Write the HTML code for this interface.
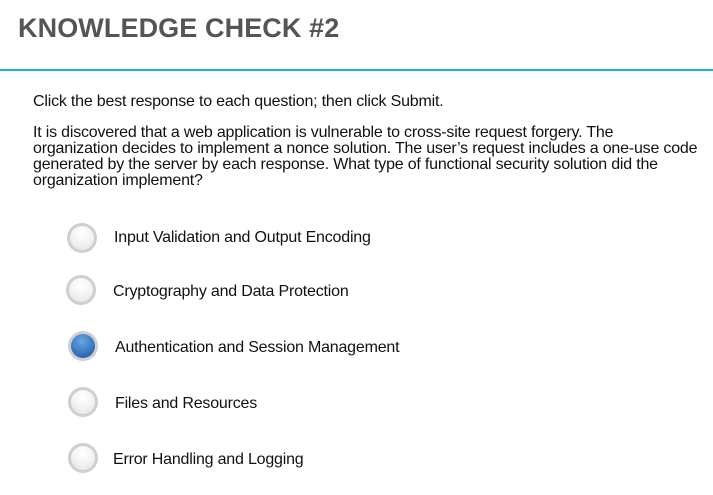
<!DOCTYPE html>
<html><head><style>
html,body{margin:0;padding:0;background:#fff;width:713px;height:495px;overflow:hidden;font-family:"Liberation Sans",Arial,sans-serif;}
.title{position:absolute;left:18px;top:13px;font-size:27px;font-weight:bold;color:#555;letter-spacing:0.1px;}
.line{position:absolute;left:0;top:69px;width:713px;height:2px;background:#1eaedb;}
.t{position:absolute;left:33px;font-size:16px;color:#111;letter-spacing:-0.2px;line-height:16px;white-space:nowrap;}
.r{position:absolute;width:30px;height:30px;border-radius:50%;background:#cfcfcf;}
.r::after{content:"";position:absolute;left:3px;top:3px;width:24px;height:24px;border-radius:50%;background:radial-gradient(circle at 50% 30%,#fff 0%,#f3f3f3 50%,#e2e2e2 100%);}
.r.sel::after{background:radial-gradient(circle at 45% 30%,#6aa6e0 0%,#3a78c2 55%,#1f4f94 100%);}
.o{position:absolute;font-size:16px;color:#111;letter-spacing:-0.2px;white-space:nowrap;}
</style></head><body>
<div class="title">KNOWLEDGE CHECK #2</div>
<div class="line"></div>
<div class="t" style="top:94px">Click the best response to each question; then click Submit.</div>
<div class="t" style="top:125px">It is discovered that a web application is vulnerable to cross-site request forgery. The<br>organization decides to implement a nonce solution. The user’s request includes a one-use code<br>generated by the server by each response. What type of functional security solution did the<br>organization implement?</div>
<div class="r" style="left:67px;top:223px"></div><div class="o" style="left:114px;top:229px">Input Validation and Output Encoding</div>
<div class="r" style="left:66px;top:275px"></div><div class="o" style="left:113px;top:283px">Cryptography and Data Protection</div>
<div class="r sel" style="left:68px;top:331px"></div><div class="o" style="left:115px;top:339px">Authentication and Session Management</div>
<div class="r" style="left:68px;top:387px"></div><div class="o" style="left:115px;top:395px">Files and Resources</div>
<div class="r" style="left:68px;top:443px"></div><div class="o" style="left:113px;top:451px">Error Handling and Logging</div>
</body></html>
